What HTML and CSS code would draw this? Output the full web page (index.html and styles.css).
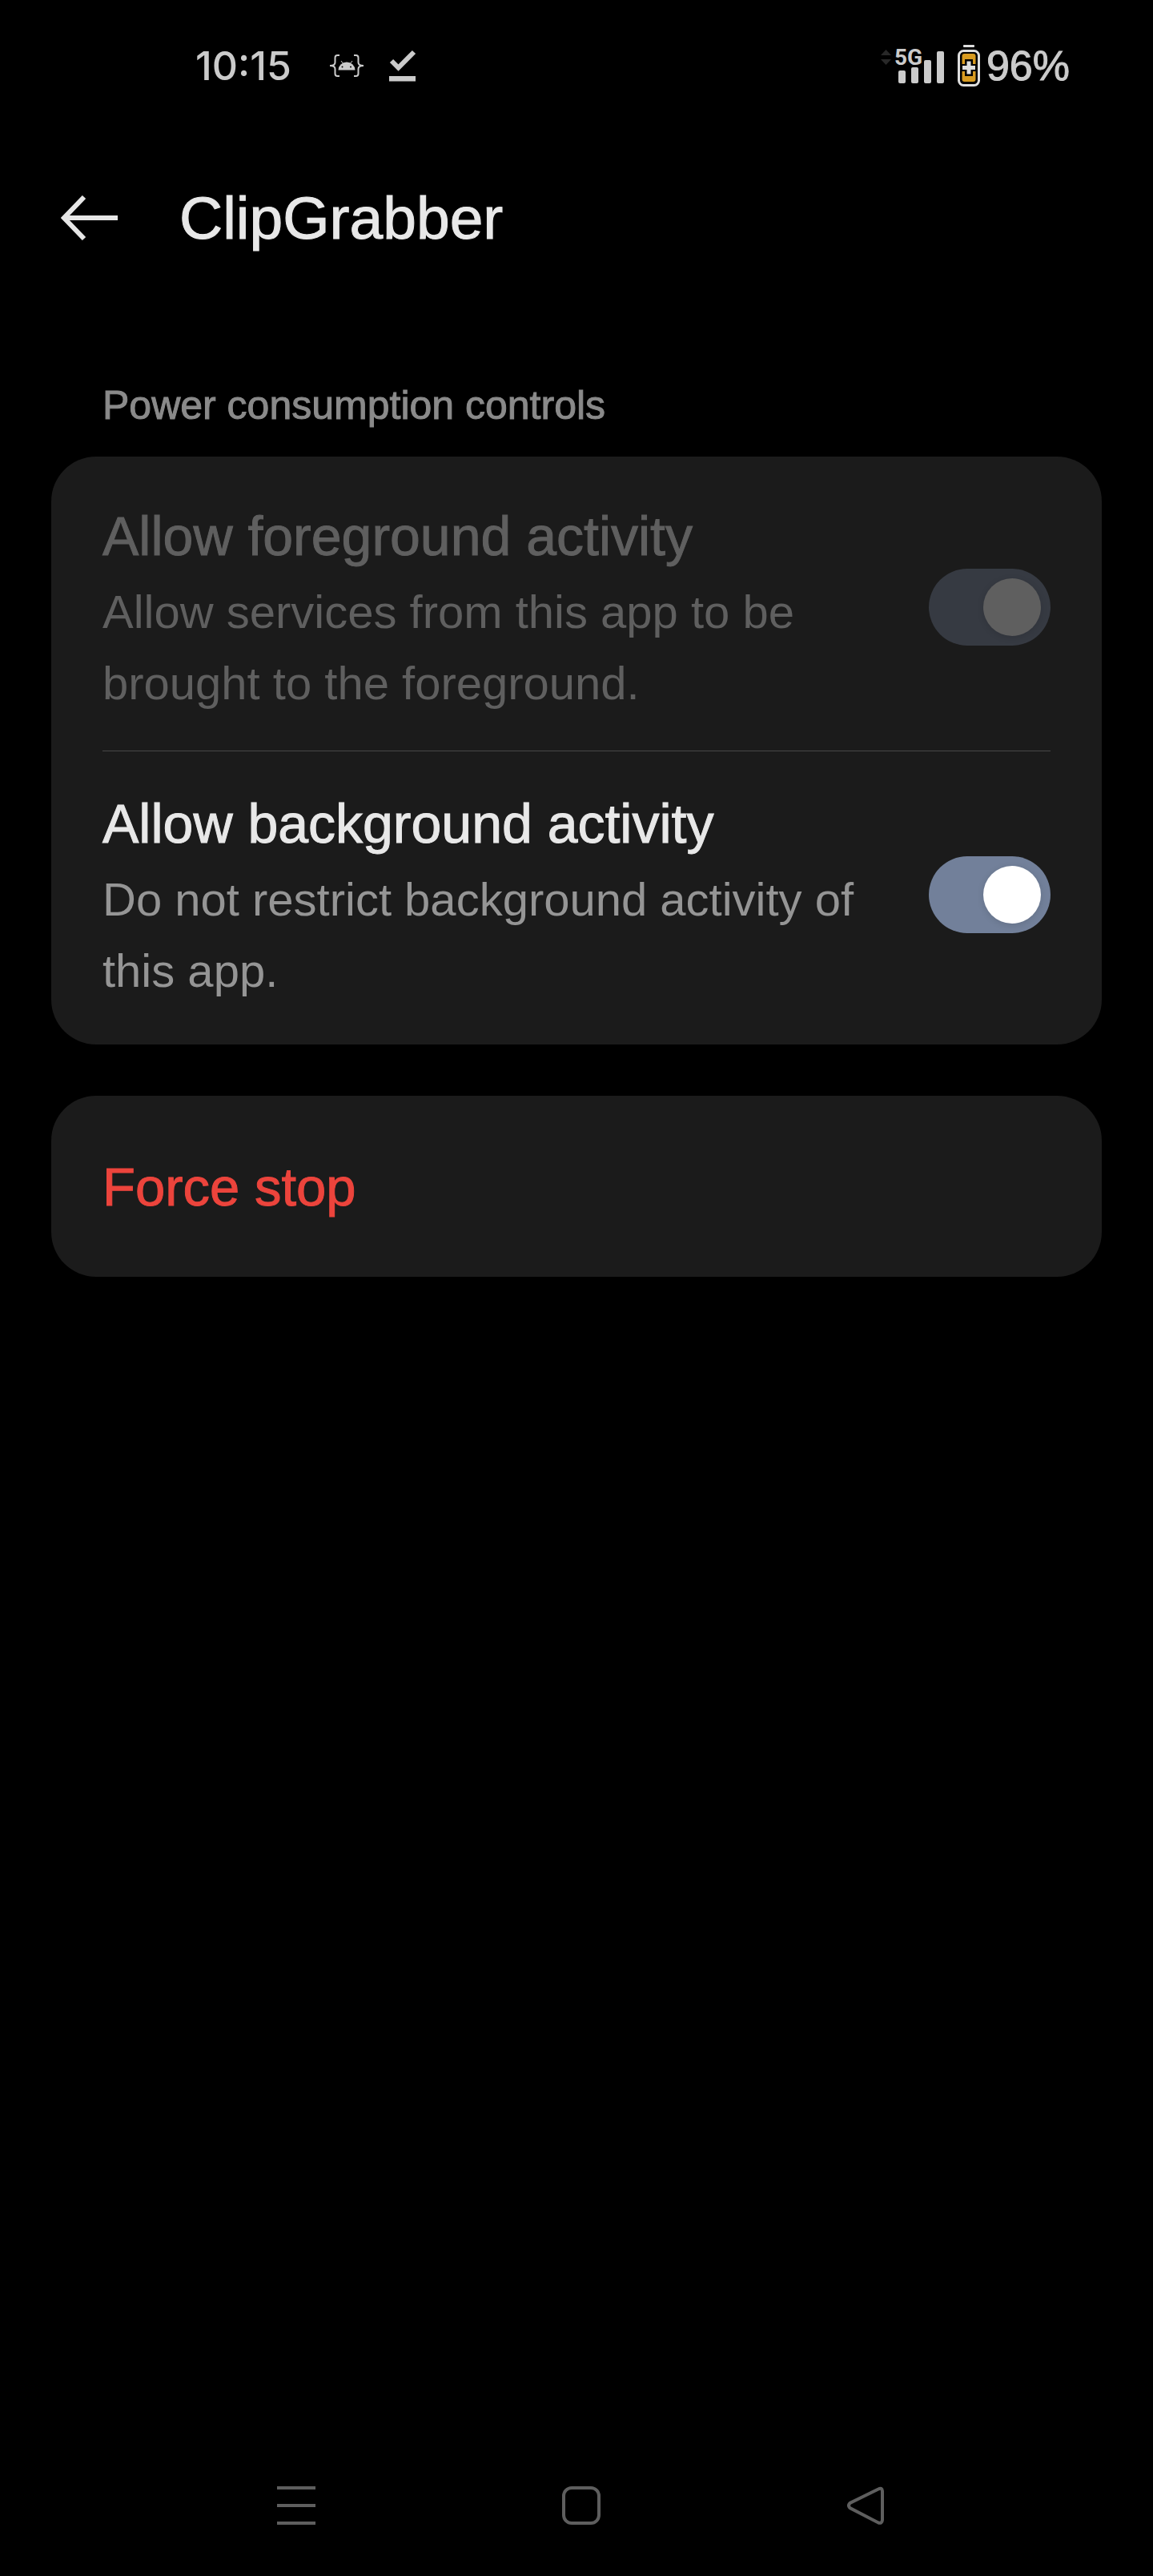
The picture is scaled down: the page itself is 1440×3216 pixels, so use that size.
FILE: index.html
```html
<!DOCTYPE html>
<html lang="en">
<head>
<meta charset="utf-8">
<meta name="viewport" content="width=device-width, initial-scale=1">
<title>ClipGrabber</title>
<link rel="stylesheet" href="styles.css">
</head>
<body>
<div class="screen">
  <div class="status">
    <div class="status-group status-left">
      <time class="clock">10:15</time>
      <svg class="icon-dev" viewBox="0 0 42 28" aria-hidden="true">
        <g fill="none" stroke="#cbcbcb" stroke-width="2">
          <path d="M12 1H9.500Q6.500 1 6.500 4V10Q6.500 14 0 14Q6.500 14 6.500 18V24Q6.500 27 9.500 27H12"/>
          <path d="M30 1H32.500Q35.500 1 35.500 4V10Q35.500 14 42 14Q35.500 14 35.500 18V24Q35.500 27 32.500 27H30"/>
          <path stroke-width="1" d="M14 8L17 12M28 8L25 12"/>
        </g>
        <path fill="#cbcbcb" d="M10.500 19.500A10.500 10 0 0 1 31.500 19.500Z"/>
        <circle cx="15.500" cy="15.500" r="1" fill="#000"/><circle cx="26" cy="15.500" r="1" fill="#000"/>
      </svg>
      <svg class="icon-check" viewBox="0 0 34 40" aria-hidden="true">
        <path d="M3 14L11.500 22.500L31 3" fill="none" stroke="#cbcbcb" stroke-width="6"/>
        <path d="M0 33H33V39.500H0Z" fill="#cbcbcb"/>
      </svg>
    </div>
    <div class="status-group status-right">
      <div class="signal">
        <svg class="icon-signal" viewBox="0 0 80 48" aria-hidden="true">
          <path d="M0 11L6.500 4L13 11ZM0 16H13L6.500 23Z" fill="#282828"/>
          <g fill="#cbcbcb">
            <rect x="22" y="30" width="9" height="16" rx="2"/>
            <rect x="38" y="26" width="9" height="20" rx="2"/>
            <rect x="54" y="17" width="9" height="29" rx="2"/>
            <rect x="70" y="6" width="9" height="40" rx="2"/>
          </g>
        </svg>
        <span class="network">5G</span>
      </div>
      <svg class="icon-battery" viewBox="0 0 28 52" aria-hidden="true">
        <rect x="7" y="0" width="14" height="3" rx="1" fill="#dedede"/>
        <rect x="1.500" y="7.500" width="25" height="43" rx="6" fill="none" stroke="#dedede" stroke-width="3"/>
        <rect x="5.500" y="11" width="17" height="35" rx="3" fill="#d89b20"/>
        <path d="M9 18H19V24H24V33H19V39H9V33H4V24H9Z" fill="#000"/>
        <path d="M14 20.500V36.500M6 28.500H22" stroke="#dedede" stroke-width="5"/>
      </svg>
      <span class="percent">96%</span>
    </div>
  </div>

  <header class="appbar">
    <button class="back" aria-label="Back">
      <svg viewBox="0 0 72 56" aria-hidden="true">
        <path d="M29 2L4 28L29 54M3 28H71" fill="none" stroke="#e6e6e6" stroke-width="6"/>
      </svg>
    </button>
    <h1 class="title">ClipGrabber</h1>
  </header>

  <main class="content">
    <h2 class="section">Power consumption controls</h2>
    <div class="card">
      <label class="row row-disabled">
        <span class="row-text">
          <span class="row-title">Allow foreground activity</span>
          <span class="row-desc">Allow services from this app to be brought to the foreground.</span>
        </span>
        <input class="switch" type="checkbox" role="switch" checked disabled>
      </label>
      <label class="row">
        <span class="row-text">
          <span class="row-title">Allow background activity</span>
          <span class="row-desc">Do not restrict background activity of this app.</span>
        </span>
        <input class="switch" type="checkbox" role="switch" checked>
      </label>
    </div>
    <button class="card stop">Force stop</button>
  </main>

  <nav class="navbar" aria-label="System navigation">
    <button class="nav-button" aria-label="Recent apps">
      <svg viewBox="0 0 48 48" aria-hidden="true"><path d="M0 2H48M0 24H48M0 46H48" fill="none" stroke="#5e5e5e" stroke-width="4"/></svg>
    </button>
    <button class="nav-button" aria-label="Home">
      <svg viewBox="0 0 48 48" aria-hidden="true"><rect x="2" y="2" width="44" height="44" rx="10" fill="none" stroke="#5e5e5e" stroke-width="4"/></svg>
    </button>
    <button class="nav-button" aria-label="Back">
      <svg viewBox="0 0 48 48" aria-hidden="true"><path d="M39 3.500L3.500 21Q0.500 24 3.500 27L39 45.500Q43.500 47 44 42V6Q43.500 1 39 3.500Z" fill="none" stroke="#5e5e5e" stroke-width="4"/></svg>
    </button>
  </nav>
</div>
</body>
</html>
```
FILE: styles.css
```css
* { box-sizing: border-box; }

body {
  margin: 0;
  background: #000;
  color: #e8e8e8;
  font-family: "Liberation Sans", Arial, sans-serif;
}

h1, h2 { margin: 0; font-weight: 400; }

button {
  padding: 0;
  border: 0;
  background: none;
  color: inherit;
  font: inherit;
  text-align: left;
}

svg { display: block; }

/* Medium weight for headings and labels */
.percent, .title, .section, .row-title, .stop {
  -webkit-text-stroke: 1px currentColor;
}

.screen {
  display: flex;
  flex-direction: column;
  min-height: 100vh;
}

/* Status bar */
.status {
  display: flex;
  justify-content: space-between;
  align-items: center;
  height: 164px;
  padding: 0 104px 0 244px;
  color: #cbcbcb;
  font-size: 50px;
  line-height: 60px;
}

.status-group { display: flex; align-items: center; }
.status-left { gap: 32px; }
.status-right { gap: 8px; }
.clock { width: 136px; font-family: Inter, sans-serif; font-weight: 500; }
.percent { font-size: 52px; }
.icon-dev { width: 42px; height: 28px; }
.icon-check { width: 34px; height: 40px; }
.signal { position: relative; margin-right: 8px; }
.icon-signal { width: 80px; height: 48px; }

.network {
  position: absolute;
  left: 17px;
  top: 0;
  font: bold 28px/28px "Liberation Sans Narrow", Roboto, sans-serif;
}

.icon-battery { width: 28px; height: 52px; }

/* App bar */
.appbar {
  display: flex;
  align-items: center;
  gap: 76px;
  height: 216px;
  padding: 0 76px;
}

.back svg { width: 72px; height: 56px; }
.title { font-size: 75px; line-height: 88px; }

/* Settings */
.content {
  display: flex;
  flex-direction: column;
  flex: 1;
  padding: 96px 64px 0;
}

.section {
  margin-bottom: 34px;
  padding: 0 64px;
  color: #8a8a8a;
  font-size: 50px;
  line-height: 60px;
}

.card {
  padding: 8px 64px;
  border-radius: 56px;
  background: #1b1b1b;
}

.row {
  display: flex;
  align-items: center;
  justify-content: space-between;
  gap: 72px;
  height: 359px;
}

.row + .row { border-top: 1px solid #474747; }
.row-text { display: flex; flex-direction: column; flex: 1; }
.row-title { font-size: 68px; line-height: 100px; }
.row-desc { color: #959595; font-size: 58px; line-height: 89px; }
.row-disabled .row-title, .row-disabled .row-desc { color: #5f5f5f; }

.switch {
  display: flex;
  flex: none;
  align-items: center;
  justify-content: flex-end;
  width: 152px;
  height: 96px;
  margin: 0;
  padding: 12px;
  border-radius: 48px;
  background: #72809a;
  appearance: none;
}

.switch::before {
  content: "";
  width: 72px;
  height: 72px;
  border-radius: 50%;
  background: #fff;
  box-shadow: 0 2px 8px rgba(0, 0, 0, 0.12);
}

.switch:disabled { background: #363a42; }
.switch:disabled::before { background: #5f5f5f; }

.stop {
  height: 226px;
  margin-top: 64px;
  color: #ec443c;
  font-size: 67px;
}

/* System navigation */
.navbar {
  display: grid;
  grid-template-columns: repeat(3, 1fr);
  justify-items: center;
  align-items: center;
  height: 176px;
  padding: 0 180px 0 192px;
}

.nav-button svg { width: 48px; height: 48px; }
```
